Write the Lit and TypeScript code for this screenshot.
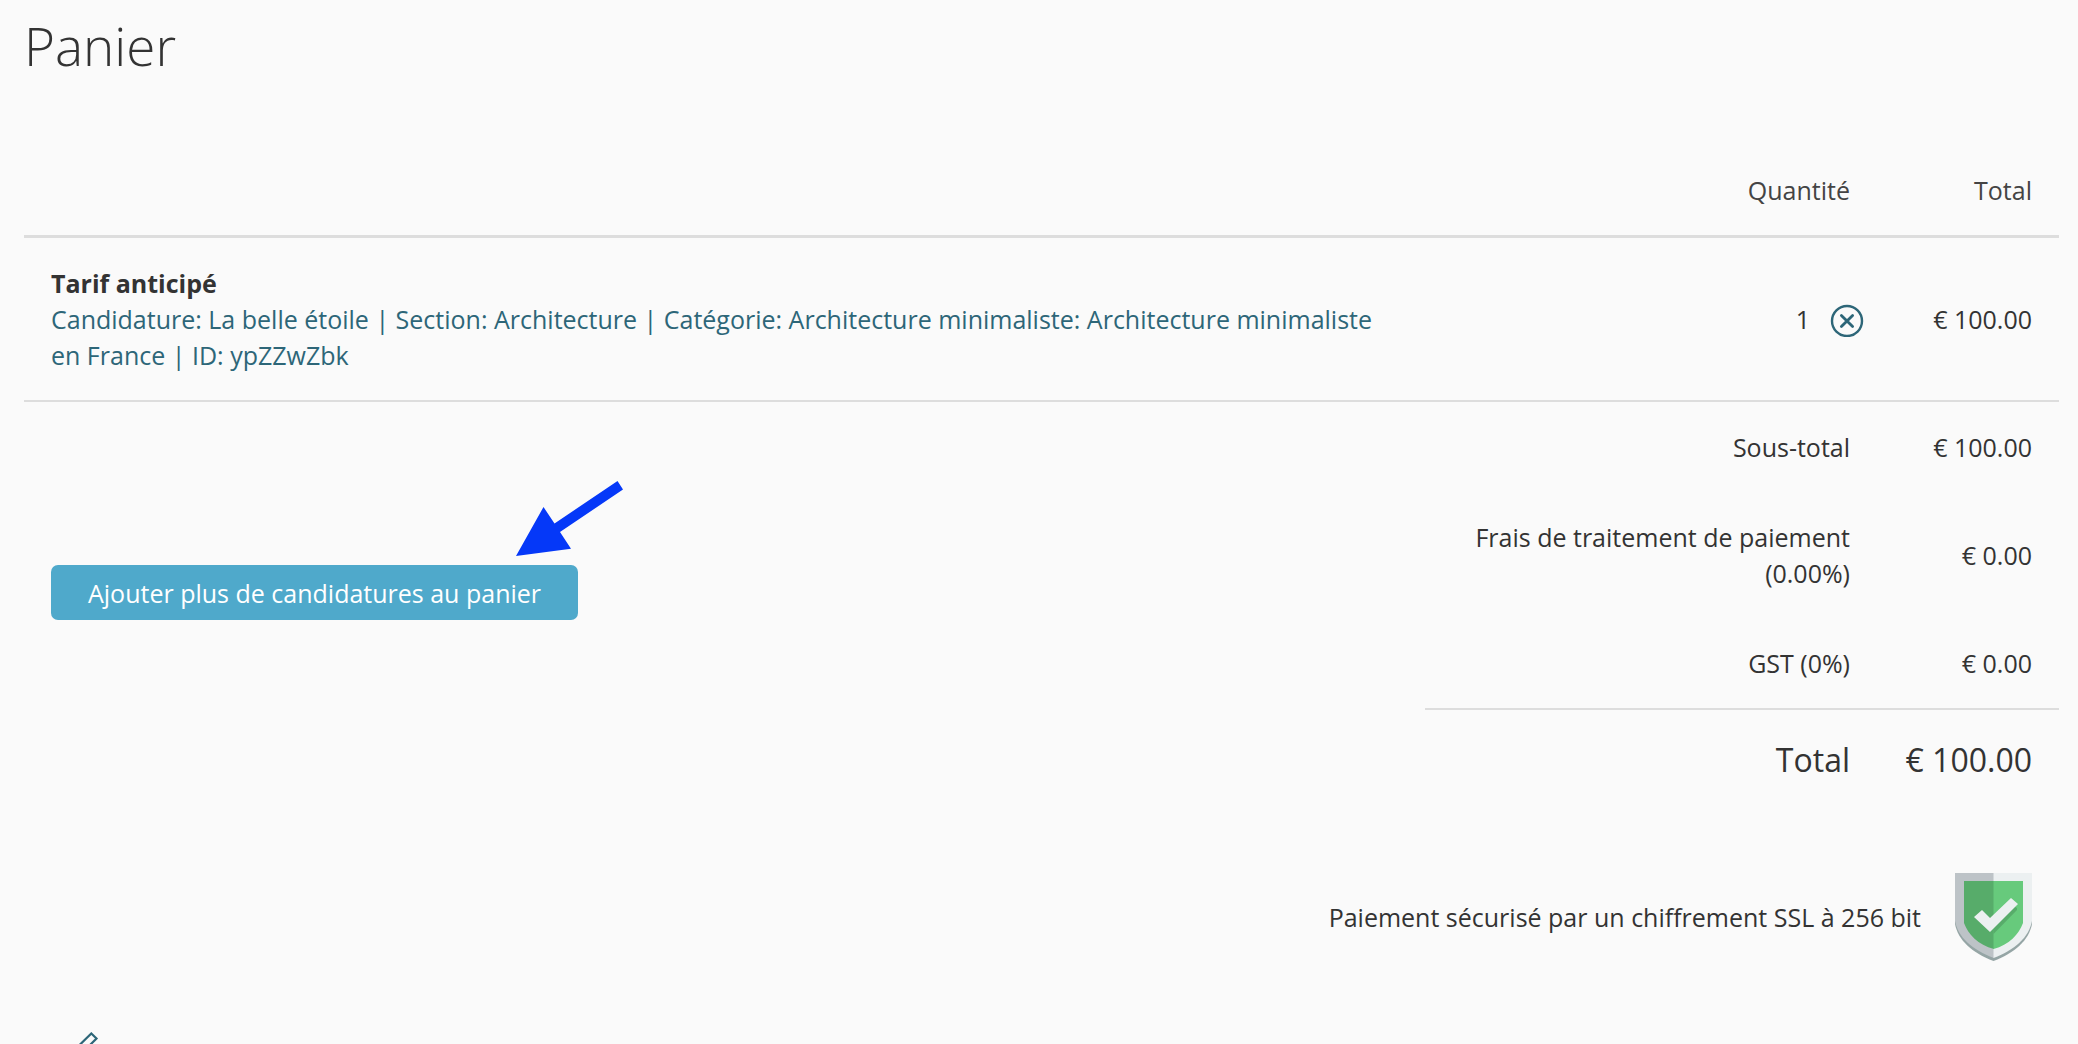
import { LitElement, html, css } from "lit";
import { customElement } from "lit/decorators.js";

interface SummaryLine {
  label: string;
  amount: string;
}

const CHARGES: SummaryLine[] = [
  { label: "Frais de traitement de paiement (0.00%)", amount: "€ 0.00" },
  { label: "GST (0%)", amount: "€ 0.00" },
];

@customElement("app-root")
export class AppRoot extends LitElement {
  static styles = css`
    :host {
      display: block;
      min-height: 100vh;
      box-sizing: border-box;
      padding: 10px 19px 0 24px;
      background: #fafafa;
      color: #333;
      font-family: "Open Sans", "Noto Sans", sans-serif;
      font-size: 25px;
      line-height: 36px;
    }
    .title {
      margin: 0;
      font-size: 53px;
      font-weight: 300;
      line-height: 72px;
    }
    .cart {
      width: 100%;
      margin-top: 63px;
      border-collapse: separate;
      border-spacing: 0;
      table-layout: fixed;
    }
    .col-label {
      width: 452px;
    }
    .col-amount {
      width: 182px;
    }
    .cell {
      padding: 27px;
      text-align: right;
      font-weight: 400;
      vertical-align: middle;
    }
    .head {
      border-bottom: 3px solid #ddd;
      color: #444;
    }
    .ruled {
      border-bottom: 2px solid #ddd;
    }
    .name {
      text-align: left;
    }
    .item {
      display: block;
      font-weight: 700;
    }
    .link {
      color: #2d6678;
      text-decoration: none;
    }
    .quantity {
      display: flex;
      align-items: center;
      justify-content: flex-end;
      gap: 20px;
      margin-right: -14px;
    }
    .remove {
      display: block;
      padding: 0;
      border: 0;
      background: none;
      cursor: pointer;
    }
    .icon {
      display: block;
    }
    .actions {
      padding-bottom: 54px;
      text-align: left;
    }
    .add-wrap {
      display: inline-block;
      position: relative;
      vertical-align: top;
    }
    .add {
      display: block;
      height: 55px;
      padding: 0 37px;
      border: 0;
      border-radius: 7px;
      background: #4fa9cb;
      color: #fff;
      font: inherit;
      cursor: pointer;
    }
    .arrow {
      position: absolute;
      right: -46px;
      bottom: 64px;
      pointer-events: none;
    }
    .grand {
      font-size: 32px;
      line-height: 46px;
      white-space: nowrap;
    }
    .secure {
      display: flex;
      align-items: center;
      justify-content: flex-end;
      gap: 34px;
      margin: 63px 27px 0;
    }
    .edit {
      display: block;
      width: 24px;
      margin: 71px 0 0 51px;
    }
  `;

  render() {
    return html`
      <main>
        <h1 class="title">Panier</h1>
        <table class="cart">
          <colgroup>
            <col />
            <col class="col-label" />
            <col class="col-amount" />
          </colgroup>
          <thead>
            <tr>
              <td class="cell head"></td>
              <th class="cell head" scope="col">Quantité</th>
              <th class="cell head" scope="col">Total</th>
            </tr>
          </thead>
          <tbody>
            <tr>
              <td class="cell ruled name">
                <strong class="item">Tarif anticipé</strong>
                <a class="link" href="#candidature"
                  >Candidature: La belle étoile | Section: Architecture |
                  Catégorie: Architecture minimaliste: Architecture minimaliste
                  en France | ID: ypZZwZbk</a
                >
              </td>
              <td class="cell ruled">
                <div class="quantity">
                  <span>1</span>
                  <button class="remove" type="button" aria-label="Retirer">
                    ${this.removeIcon()}
                  </button>
                </div>
              </td>
              <td class="cell ruled">€ 100.00</td>
            </tr>
            <tr>
              <td class="cell actions" rowspan="4">
                <div class="add-wrap">
                  <button class="add" type="button">
                    Ajouter plus de candidatures au panier
                  </button>
                  ${this.arrow()}
                </div>
              </td>
              <td class="cell">Sous-total</td>
              <td class="cell">€ 100.00</td>
            </tr>
            ${CHARGES.map((line, i) => {
              const rule = i === CHARGES.length - 1 ? "cell ruled" : "cell";
              return html`<tr>
                <td class=${rule}>${line.label}</td>
                <td class=${rule}>${line.amount}</td>
              </tr>`;
            })}
            <tr>
              <td class="cell grand">Total</td>
              <td class="cell grand">€ 100.00</td>
            </tr>
          </tbody>
        </table>
        <div class="secure">
          <span>Paiement sécurisé par un chiffrement SSL à 256 bit</span>
          ${this.shield()}
        </div>
        <a class="edit" href="#modifier" aria-label="Modifier">
          ${this.pencil()}
        </a>
      </main>
    `;
  }

  private removeIcon() {
    return html`<svg class="icon" width="34" height="36" viewBox="0 0 34 36"
      fill="none" stroke="#2d6678" aria-hidden="true">
      <circle cx="17" cy="20" r="15" stroke-width="2.4" />
      <path d="M11.400 14.400l11.200 11.200M22.600 14.400l-11.200 11.200"
        stroke-width="2.8" stroke-linecap="round" />
    </svg>`;
  }

  private arrow() {
    return html`<svg class="arrow" width="109" height="76" viewBox="0 0 109 76"
      aria-hidden="true">
      <path fill="#0538f8"
        d="M1 76L28.500 27L39.500 43.500L102.500 1L108 9.500L45 52L56 68.700Z" />
    </svg>`;
  }

  private shield() {
    return html`<svg class="icon" width="77" height="88" viewBox="0 0 77 88"
      aria-hidden="true">
      <path fill="#95a5a5"
        d="M0 48H77V51C74 67 60 80 38.500 88C17 80 3 67 0 51Z" />
      <path fill="#bdc3c7" d="M0 0H39V85C17 77 3 64 0 48Z" />
      <path fill="#ecf0f1" d="M38.500 0H77V48C74 64 60 77 38.500 85Z" />
      <path fill="#57ac6a" d="M9 8H39V76C23 72 13 61 9 50Z" />
      <path fill="#67ca7c" d="M38.500 8H68V50C64 61 54 72 38.500 76Z" />
      <path fill="#57ac6a" d="M38.500 61L62 37L62 35L57 32L38 52Z" />
      <path fill="#ecf0f1" d="M19 44L27 37L35 45L56 25L63 31L35 59Z" />
    </svg>`;
  }

  private pencil() {
    return html`<svg class="icon" width="24" height="12" viewBox="0 0 24 12"
      fill="none" stroke="#2d6678" stroke-width="2.200" aria-hidden="true">
      <path d="M3 14.500L16.300 1.500L21.500 6.500L13 15" />
    </svg>`;
  }
}
